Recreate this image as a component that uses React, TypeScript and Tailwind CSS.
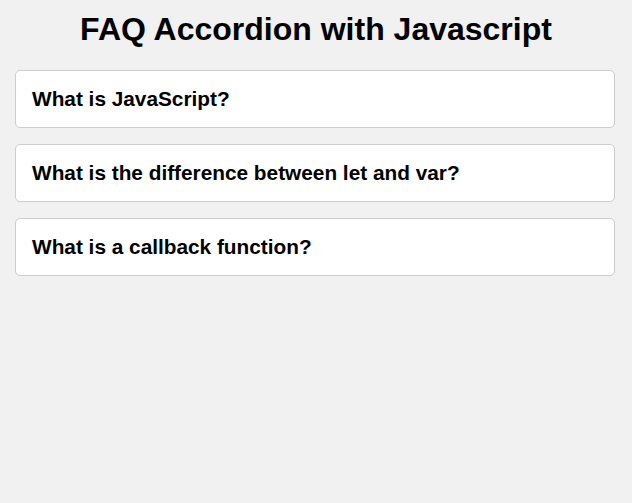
import React from 'react';

const questions = [
  'What is JavaScript?',
  'What is the difference between let and var?',
  'What is a callback function?',
];

export default function App() {
  return (
    <div className="min-h-screen bg-[#f0f1f0] pt-[11px] font-['Liberation_Sans',Arial,sans-serif] text-black">
      <h1 className="text-center text-[32px] font-bold leading-[37px] mb-[22px]">
        FAQ Accordion with Javascript
      </h1>
      <div className="mx-auto flex w-[600px] flex-col gap-4 -translate-x-px">
        {questions.map((q) => (
          <div key={q} className="rounded-[5px] border border-[#cccccc] bg-white p-4">
            <h3 className="text-[20.8px] font-bold leading-[24px]">{q}</h3>
          </div>
        ))}
      </div>
    </div>
  );
}
